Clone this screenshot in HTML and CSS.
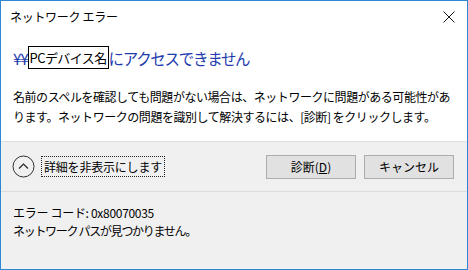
FILE: index.html
```html
<!DOCTYPE html>
<html>
<head>
    <meta charset="utf-8">
    <title>ネットワーク エラー</title>
    <link rel="stylesheet" href="styles.css">
</head>
<body>
<div class="window">
    <div class="titlebar">
        <p class="caption">ネットワーク エラー</p>
        <svg class="close" width="12" height="12" viewBox="0 0 12 12">
            <path d="M0.5 0.5 L11.5 11.5 M11.5 0.5 L0.5 11.5" stroke="#1a1a1a" stroke-width="1" fill="none"/>
        </svg>
    </div>
    <div class="main">
        <h1 class="instruction">¥¥<span class="device">PCデバイス名</span>にアクセスできません</h1>
        <p class="message">名前のスペルを確認しても問題がない場合は、ネットワークに問題がある可能性があ<br>ります。ネットワークの問題を識別して解決するには、[診断] をクリックします。</p>
    </div>
    <div class="footer">
        <div class="toggle">
            <svg class="expando" width="23" height="23" viewBox="0 0 23 23">
                <circle cx="11.5" cy="11.5" r="10.5" stroke="#333" stroke-width="1" fill="#f0f0f0"/>
                <path d="M7 13.5 L11.5 9 L16 13.5" stroke="#222" stroke-width="1.1" fill="none"/>
            </svg>
            <span class="toggle-text">詳細を非表示にします</span>
        </div>
        <div class="buttons">
            <div class="btn">診断(<u>D</u>)</div>
            <div class="btn">キャンセル</div>
        </div>
    </div>
    <div class="details">
        <p>エラー コード: 0x80070035</p>
        <p class="reason">ネットワーク パスが見つかりません。</p>
    </div>
</div>
</body>
</html>
```

FILE: styles.css
```css
* {
    padding: 0;
    margin: 0;
    box-sizing: border-box;
}

html, body {
    width: 468px;
    height: 270px;
    overflow: hidden;
    background-color: #ffffff;
    font-family: "Noto Sans CJK JP", "Noto Sans", sans-serif;
    color: #000000;
}

.window {
    width: 468px;
    height: 270px;
    border: 1px solid #2f86d4;
    display: flex;
    flex-direction: column;
    background-color: #ffffff;
}

.titlebar {
    height: 32px;
    display: flex;
    align-items: center;
    justify-content: space-between;
    padding: 0 12px 0 9px;
    flex: none;
}

.caption {
    font-size: 12px;
    letter-spacing: -0.3px;
    line-height: 16px;
}

.main {
    height: 108px;
    padding: 0 12px;
    flex: none;
}

.instruction {
    margin-top: 13px;
    font-size: 15.5px;
    font-weight: normal;
    line-height: 24px;
    letter-spacing: -1.3px;
    color: #1e3cae;
    white-space: nowrap;
}

.device {
    display: inline-block;
    border: 1px solid #000000;
    font-size: 13px;
    line-height: 21px;
    letter-spacing: -0.6px;
    color: #000000;
    padding: 0 1px 0 1px;
    vertical-align: top;
}

.message {
    margin-top: 17px;
    font-size: 12px;
    line-height: 20px;
    letter-spacing: -0.45px;
    white-space: nowrap;
}

.footer {
    height: 50px;
    flex: none;
    display: flex;
    align-items: center;
    justify-content: space-between;
    padding: 0 13px 0 11px;
    background-color: #f0f0f0;
    border-top: 1px solid #dfdfdf;
}

.toggle {
    display: flex;
    align-items: center;
    gap: 6px;
}

.toggle-text {
    font-size: 12px;
    line-height: 19px;
    letter-spacing: -0.2px;
    padding: 0 2px;
    border: 1px dotted #222222;
}

.buttons {
    display: flex;
    gap: 8px;
}

.btn {
    width: 90px;
    height: 24px;
    line-height: 22px;
    font-size: 12px;
    text-align: center;
    background-color: #e1e1e1;
    border: 1px solid #adadad;
}

.details {
    flex: 1;
    background-color: #f0f0f0;
    border-top: 1px solid #dcdcdc;
    padding: 12px 12px 0;
    font-size: 12px;
    line-height: 18px;
    letter-spacing: -0.3px;
}

.details .reason {
    letter-spacing: -1.3px;
}
```
